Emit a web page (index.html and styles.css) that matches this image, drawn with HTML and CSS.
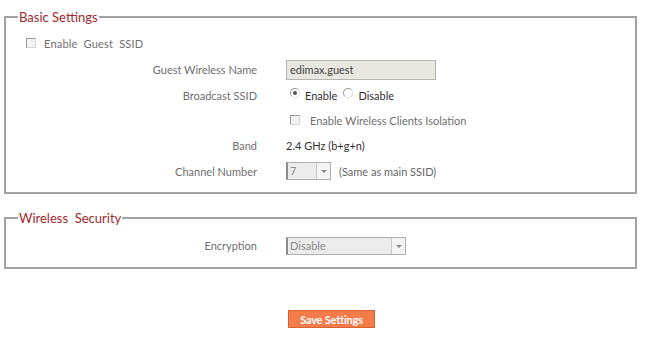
FILE: index.html
```html
<!DOCTYPE html>
<html lang="en">
<head>
    <meta charset="UTF-8">
    <title>Guest SSID</title>
    <link rel="stylesheet" href="styles.css">
</head>
<body>
    <fieldset class="group basic">
        <legend>Basic Settings</legend>
        <div class="enable-row">
            <span class="box off"></span>
            <span class="spaced">Enable Guest SSID</span>
        </div>
        <div class="form">
            <div class="label">Guest Wireless Name</div>
            <div class="value"><span class="textbox">edimax.guest</span></div>

            <div class="label">Broadcast SSID</div>
            <div class="value dark">
                <span class="radio on"></span><span class="opt">Enable</span>
                <span class="radio"></span><span>Disable</span>
            </div>

            <div class="label"></div>
            <div class="value">
                <span class="box off"></span><span class="iso">Enable Wireless Clients Isolation</span>
            </div>

            <div class="label">Band</div>
            <div class="value dark">2.4 GHz (b+g+n)</div>

            <div class="label">Channel Number</div>
            <div class="value">
                <span class="select small"><span class="sel-text">7</span><span class="arrow"></span></span>
                <span class="note">(Same as main SSID)</span>
            </div>
        </div>
    </fieldset>

    <fieldset class="group security">
        <legend>Wireless &nbsp;Security</legend>
        <div class="form">
            <div class="label">Encryption</div>
            <div class="value">
                <span class="select wide"><span class="sel-text">Disable</span><span class="arrow"></span></span>
            </div>
        </div>
    </fieldset>

    <div class="actions">
        <button class="save">Save Settings</button>
    </div>
</body>
</html>
```

FILE: styles.css
```css
body {
    margin: 0;
    padding: 9px 10px 0 4px;
    font-family: Lato, "Open Sans", sans-serif;
    font-size: 11px;
    color: #707070;
    background: #fff;
}
.group {
    margin: 0;
    padding: 0;
    width: 633px;
    border: 2px solid #a3a3a3;
    box-sizing: border-box;
}
.group legend {
    margin-left: 12px;
    padding: 0 1px;
    font-size: 13px;
    line-height: 16px;
    color: #a3282c;
}
.basic {
    height: 185px;
}
.security {
    margin-top: 16px;
    height: 59px;
}
.enable-row {
    display: flex;
    align-items: center;
    height: 24px;
    margin-top: 6px;
    padding-left: 20px;
}
.spaced {
    margin-left: 8px;
    word-spacing: 3px;
    letter-spacing: 0.2px;
}
.form {
    display: grid;
    grid-template-columns: 251px 1fr;
    grid-auto-rows: 25.4px;
    column-gap: 29px;
}
.basic .form {
    margin-top: 2px;
}
.security .form {
    margin-top: 7px;
}
.label {
    display: flex;
    align-items: center;
    justify-content: flex-end;
    text-align: right;
}
.value {
    display: flex;
    align-items: center;
}
.dark {
    color: #333;
}
.textbox {
    box-sizing: border-box;
    width: 150px;
    height: 20px;
    line-height: 18px;
    padding-left: 3px;
    border: 1px solid #b5b5b0;
    background: #e8e8e1;
    color: #444;
}
.box {
    display: inline-block;
    width: 8px;
    height: 8px;
    border: 1px solid #9a9a9a;
    border-right-color: #d6d6d6;
    border-bottom-color: #d6d6d6;
    background: #f2f2f2;
}
.value .box {
    margin-left: 4px;
}
.iso {
    margin-left: 10px;
}
.radio {
    display: inline-block;
    position: relative;
    width: 8px;
    height: 8px;
    border-radius: 50%;
    border: 1px solid #9a9a9a;
    border-right-color: #dcdcdc;
    border-bottom-color: #dcdcdc;
    margin: 0 5px 4px 4px;
}
.radio.on::after {
    content: "";
    position: absolute;
    left: 2px;
    top: 2px;
    width: 4px;
    height: 4px;
    border-radius: 50%;
    background: #555;
}
.opt {
    margin-right: 2px;
}
.select {
    display: inline-flex;
    box-sizing: border-box;
    height: 18px;
    border: 1px solid #b0b0b0;
    border-left: 2px solid #8c8c8c;
    background: #ececec;
    color: #8a8a8a;
}
.select.small {
    width: 45px;
}
.select.wide {
    width: 120px;
}
.sel-text {
    flex: 1;
    line-height: 16px;
    padding-left: 2px;
}
.arrow {
    position: relative;
    width: 13px;
    border-left: 1px solid #c8c8c8;
    background: #f4f4f4;
}
.arrow::after {
    content: "";
    position: absolute;
    left: 4px;
    top: 7px;
    border-left: 3px solid transparent;
    border-right: 3px solid transparent;
    border-top: 3px solid #888;
}
.note {
    margin-left: 8px;
    color: #666;
}
.actions {
    padding: 41px 0 0 284px;
}
.save {
    width: 87px;
    height: 18px;
    padding: 0;
    border: 1px solid #d9622f;
    background: #f47b4a;
    color: #fff;
    font-family: Lato, "Open Sans", sans-serif;
    font-size: 11px;
    font-weight: bold;
    letter-spacing: -0.2px;
}
```
